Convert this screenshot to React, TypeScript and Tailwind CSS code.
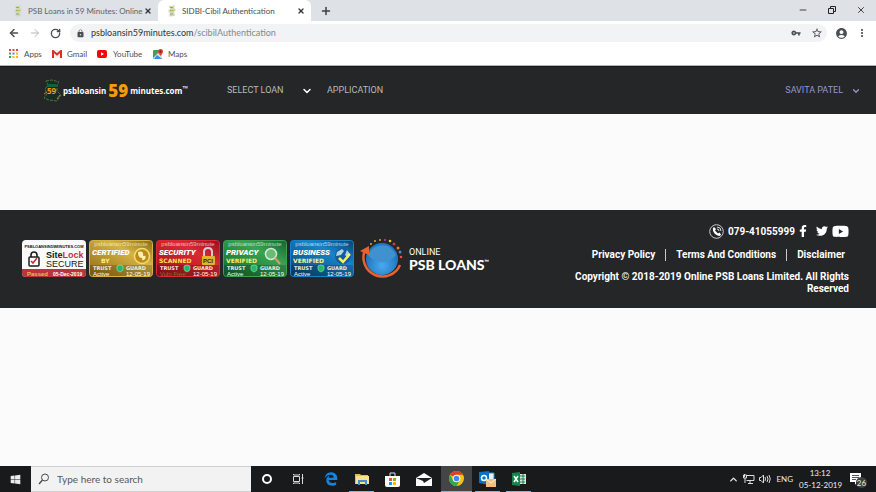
import type { ReactNode } from "react";
import { ArrowLeft, ArrowRight, ChevronDown, ChevronUp, Minus, Plus, RotateCw, X } from "lucide-react";
import { MdAccountCircle, MdLock, MdMoreVert, MdStarBorder, MdVpnKey } from "react-icons/md";
import { FaEdgeLegacy, FaFacebookF, FaTwitter, FaWindows, FaYoutube } from "react-icons/fa";

function Favicon() {
  return (
    <svg viewBox="0 0 10 12" className="h-3 w-[10px] shrink-0" aria-hidden="true">
      <path d="M2 1 8 0.5 7 3 9 5 7 7 8 11 2 11.5 3 8 1 6 3 4Z" fill="#cfd9b4" />
      <path d="M3 2.5h3M3 5.5h4M3 9h3" stroke="#93a86c" strokeWidth="1.2" />
      <path d="M4 5.5h3" stroke="#d9b64b" strokeWidth="1.2" />
    </svg>
  );
}

function Tab({ title, active }: { title: string; active?: boolean }) {
  return (
    <div
      className={
        active
          ? "flex h-[21px] w-[153px] items-center rounded-t-md bg-white pl-[9px] pr-1 text-[#4a4d51]"
          : "flex h-[21px] w-[158px] items-center pl-[13px] pr-1 text-[#5f6368]"
      }
    >
      <Favicon />
      <span className="ml-[5px] whitespace-nowrap">{title}</span>
      <button aria-label="Close tab" className="ml-auto flex size-3 items-center justify-center text-[#33363a]">
        <X size={8} strokeWidth={4} />
      </button>
    </div>
  );
}

function BrowserTop() {
  return (
    <header className="shrink-0 bg-white font-[Lato,sans-serif] text-[8px]">
      <div className="flex h-[21px] items-center bg-[#dee1e6]">
        <Tab title="PSB Loans in 59 Minutes: Online" />
        <Tab title="SIDBI-Cibil Authentication" active />
        <button aria-label="New tab" className="ml-[9px] text-[#3c4043]">
          <Plus size={12} strokeWidth={3} />
        </button>
        <div className="ml-auto flex items-center gap-5 pr-[10px] pb-[2px] text-[#222]">
          <button aria-label="Minimize"><Minus size={10} strokeWidth={2} /></button>
          <button aria-label="Restore">
            <svg width="8" height="8" viewBox="0 0 8 8" fill="none" stroke="currentColor"><path d="M.5 2.5h5v5h-5zM2.5 2V.5h5v5H6" /></svg>
          </button>
          <button aria-label="Close"><X size={10} strokeWidth={2} /></button>
        </div>
      </div>
      <div className="flex h-6 items-center pl-2 pr-2 text-[#4b4e52]">
        <button aria-label="Back" className="w-[21px]"><ArrowLeft size={12} strokeWidth={3} /></button>
        <button aria-label="Forward" className="w-[21px] text-[#b5b7ba]"><ArrowRight size={12} strokeWidth={2} /></button>
        <button aria-label="Reload" className="w-5"><RotateCw size={11} strokeWidth={3} /></button>
        <div className="flex h-[18px] flex-1 items-center rounded-full bg-[#f1f3f4] pl-[6px] pr-1">
          <MdLock size={9} />
          <div className="ml-[6px] flex-1 text-[9px] text-[#303337]">
            psbloansin59minutes.com<span className="text-[#85898d]">/scibilAuthentication</span>
          </div>
          <button aria-label="Saved passwords"><MdVpnKey size={10} /></button>
          <button aria-label="Bookmark this page" className="ml-[10px]"><MdStarBorder size={12} /></button>
        </div>
        <button aria-label="Profile" className="ml-2"><MdAccountCircle size={13} /></button>
        <button aria-label="Menu" className="ml-2"><MdMoreVert size={12} /></button>
      </div>
      <nav className="flex h-[21px] items-center border-b border-[#b4b4b4] pb-[3px] pl-[9px] text-[#4b4e52]" aria-label="Bookmarks">
        <a href="#apps" className="flex w-[43px] items-center gap-[6px]">
          <svg width="9" height="9" viewBox="0 0 9 9" aria-hidden="true">
            <path d="M0 0h2v2H0zM3.5 0h2v2h-2z" fill="#ea4335" />
            <path d="M7 0h2v2H7z" fill="#ea4335" />
            <path d="M0 3.500h2v2H0z" fill="#34a853" />
            <path d="M3.500 3.500h2v2h-2z" fill="#4285f4" />
            <path d="M7 3.500h2v2H7zM3.500 7h2v2h-2zM7 7h2v2H7z" fill="#fbbc05" />
            <path d="M0 7h2v2H0z" fill="#34a853" />
          </svg>
          Apps
        </a>
        <a href="#gmail" className="flex w-[45px] items-center gap-[5px]">
          <svg width="10" height="8" viewBox="0 0 10 8" aria-hidden="true">
            <path d="M0 0h10v8H0z" fill="#f1f1f1" />
            <path d="M1 8V1l4 3.500L9 1v7" fill="none" stroke="#d93025" strokeWidth="2" />
          </svg>
          Gmail
        </a>
        <a href="#youtube" className="flex w-14 items-center gap-[6px]">
          <svg width="10" height="8" viewBox="0 0 10 8" aria-hidden="true">
            <rect width="10" height="8" rx="2" fill="#f00" />
            <path d="m4 2.300 3 1.700-3 1.700z" fill="#fff" />
          </svg>
          YouTube
        </a>
        <a href="#maps" className="flex items-center gap-[5px]">
          <svg width="10" height="10" viewBox="0 0 10 10" aria-hidden="true">
            <rect y="1" width="9" height="9" rx="1" fill="#34a853" />
            <path d="M0 9 7 2l2 2v5L8 10H1z" fill="#d7dce0" />
            <path d="m4 6 5 4H1z" fill="#4285f4" />
            <path d="M7.500 7C6.500 5 5 4.500 5 2.500a2.500 2.500 0 0 1 5 0C10 4.500 8.500 5 7.500 7" fill="#e33b2e" />
            <circle cx="7.500" cy="2.500" r=".9" fill="#7c1f18" />
          </svg>
          Maps
        </a>
      </nav>
    </header>
  );
}

function SiteNav() {
  return (
    <nav className="flex h-12 shrink-0 items-center border-t border-[#17181a] bg-[#242628] pl-[42px] pr-[15px] font-[Roboto,sans-serif] text-[9px] text-[#b9babc]">
      <a href="#home" className="flex w-[185px] items-center font-['Open_Sans',sans-serif] text-[8px] font-bold text-white">
        <svg width="20" height="23" viewBox="0 0 20 23" className="shrink-0" aria-hidden="true">
          <path d="m4 2 6-1 7 2-2 3v6l4 4-4 6-8-1-5-2 3-4-2-5 3-4z" fill="#182d21" stroke="#4d7448" strokeDasharray="3 1" />
          <path d="M5 5h9v3H5z" fill="#0b6440" />
          <path d="m2 15 3-2m10 7 3-4" stroke="#b18536" />
          <text x="5" y="15" fontSize="8" fontWeight="700" fill="#f39b14" fontFamily="Open Sans">59</text>
        </svg>
        <span className="ml-[1px]">psbloansin</span>
        <span className="mx-[2px] text-[17px] font-extrabold leading-5 text-[#f79a0b]">59</span>
        <span>minutes.com</span>
        <span className="-mt-1 text-[7px] leading-3">™</span>
      </a>
      <button className="flex w-[100px] items-center text-left">
        <span className="w-[74px]">SELECT LOAN</span>
        <ChevronDown size={12} strokeWidth={3} className="text-white" />
      </button>
      <a href="#application">APPLICATION</a>
      <button className="ml-auto flex items-center gap-2 text-[#9697cf]">
        SAVITA PATEL
        <ChevronDown size={10} strokeWidth={3} />
      </button>
    </nav>
  );
}

function SiteLockSeal() {
  return (
    <svg viewBox="0 0 64 38" className="h-[38px] w-16" role="img" aria-label="SiteLock Secure" fontFamily="Liberation Sans">
      <defs><clipPath id="lock-shape"><rect width="64" height="37" rx="4" /></clipPath></defs>
      <g clipPath="url(#lock-shape)">
        <path d="M0 0h64v38H0z" fill="#fafafa" />
        <path d="M0 29h64v9H0z" fill="#b9343c" />
      </g>
      <text x="32" y="8" fontSize="4" fontWeight="700" textAnchor="middle" fill="#161616">PSBLOANSIN59MINUTES.COM</text>
      <path d="M9 18v-3q0-3 3-3t3 3v3" fill="none" stroke="#1d1d1d" strokeWidth="1.600" />
      <rect x="7" y="17" width="10" height="9" rx="1" fill="#fff" stroke="#1d1d1d" strokeWidth="1.500" />
      <path d="m9 21 2 2 4-5" fill="none" stroke="#ca303a" strokeWidth="1.600" />
      <text x="24" y="18" fontSize="9" fontWeight="700" fill="#151515">Site<tspan fill="#c72d38">Lock</tspan></text>
      <text x="24" y="27" fontSize="9" fill="#202020">SECURE</text>
      <text x="5" y="36" fontSize="6" fontWeight="700" fill="#e1c243">Passed</text>
      <text x="31" y="36" fontSize="5" fontWeight="700" fill="#fff">05-Dec-2019</text>
    </svg>
  );
}

type SealProps = { id: string; title: string; sub: string; light: string; dark: string; status: string; subColor: string; children: ReactNode };

function TrustSeal({ id, title, sub, light, dark, status, subColor, children }: SealProps) {
  return (
    <svg viewBox="0 0 64 38" className="h-[38px] w-16" role="img" aria-label={`${title} ${sub}`} fontFamily="Liberation Sans">
      <defs>
        <linearGradient id={id} x1="0" y1="1" x2="1" y2="0">
          <stop offset="0" stopColor={dark} />
          <stop offset=".65" stopColor={light} />
          <stop offset="1" stopColor={dark} />
        </linearGradient>
      </defs>
      <rect x=".5" y=".5" width="63" height="36" rx="3" fill={`url(#${id})`} stroke={light} />
      <path d="M1 25h62v9q0 2-2 2H3q-2 0-2-2z" fill="#000" opacity=".18" />
      <text x="32" y="6" fontSize="6" textAnchor="middle" fill="#fff" opacity=".65">psbloansin59minute</text>
      {children}
      <text x="3" y="15" fontSize="8" fontWeight="900" fontStyle="italic" fill="#fff" fontFamily="Roboto, sans-serif">{title}</text>
      <text x={sub === "BY" ? 12 : 3} y="23" fontSize="6" fontWeight="700" fill={subColor} fontFamily="DejaVu Sans">{sub}</text>
      <text x="4" y="30" fontSize="5" fontWeight="700" fill="#f1eee2" fontFamily="DejaVu Sans">TRUST</text>
      <text x="37" y="30" fontSize="5" fontWeight="700" fill="#f1eee2" fontFamily="DejaVu Sans">GUARD</text>
      <path d="m28 26 3-1 3 1v3q0 2-3 3-3-1-3-3z" fill="#20b969" stroke="#a6dfb9" strokeWidth=".6" />
      <text x="4" y="36" fontSize="6" fill={status === "Active" ? "#fff" : "#7d7a35"}>{status}</text>
      <text x="37" y="36" fontSize="6" fill="#fff">12-05-19</text>
    </svg>
  );
}

function Seals() {
  return (
    <div className="flex gap-[3px]">
      <SiteLockSeal />
      <TrustSeal id="gold" title="CERTIFIED" sub="BY" light="#d5b345" dark="#8d6910" status="Active" subColor="#ffee72">
        <circle cx="53" cy="16" r="7.500" fill="#bc8c17" stroke="#f3dc77" strokeWidth="1.500" />
        <path d="M49 12q6-2 5 4 4-1 2 3-3 3-3-1-4 0-4-6" fill="#fbefb4" />
      </TrustSeal>
      <TrustSeal id="red" title="SECURITY" sub="SCANNED" light="#dc2935" dark="#96101b" status="Vuln Free" subColor="#ffe44e">
        <path d="M48 16v-4q0-4 4-4t4 4v4" fill="none" stroke="#cfd2d2" strokeWidth="2" />
        <rect x="46" y="16" width="13" height="9" rx="1" fill="#e1b32e" />
        <text x="47" y="23" fontSize="6" fontWeight="700" fill="#372100">PCI</text>
      </TrustSeal>
      <TrustSeal id="green" title="PRIVACY" sub="VERIFIED" light="#3aa352" dark="#12642d" status="Active" subColor="#f7ee66">
        <circle cx="48" cy="14" r="5.500" fill="#6abb74" stroke="#d5ead5" strokeWidth="1.500" />
        <path d="m52 18 5 6" stroke="#d99c68" strokeWidth="2" />
      </TrustSeal>
      <TrustSeal id="blue" title="BUSINESS" sub="VERIFIED" light="#1784c7" dark="#084172" status="Active" subColor="#f4f49a">
        <circle cx="53" cy="16" r="8" fill="#1659a0" />
        <path d="m47 12 5-3 2 2-3 4-5 1m11-6 3 4-2 4-3-3z" fill="#a8d5df" />
        <path d="m49 18 4 4 7-8" fill="none" stroke="#edf65e" strokeWidth="2.500" />
      </TrustSeal>
    </div>
  );
}

function PsbLogo() {
  return (
    <div className="flex items-center text-white">
      <svg width="45" height="45" viewBox="0 0 45 45" aria-hidden="true">
        <defs>
          <radialGradient id="orb" cy=".7"><stop stopColor="#49aaf1" /><stop offset="1" stopColor="#2377bf" /></radialGradient>
        </defs>
        <circle cx="23" cy="22" r="16" fill="url(#orb)" />
        <path d="M9 18c5-12 22-14 28 0-5 8-20 10-28 0" fill="#3f91cf" />
        <path d="M6 13A19 19 0 1 0 41 28" fill="none" stroke="#ea6130" strokeWidth="2.500" />
        <path d="m1 14 9-5v9" fill="#ea6130" />
        <circle cx="12" cy="7" r="1" fill="#d8a838" /><circle cx="16" cy="4" r="1" fill="#b7bd44" />
        <circle cx="21" cy="3" r="1" fill="#e99c34" /><circle cx="26" cy="3" r="1.200" fill="#943c92" />
        <circle cx="31" cy="4" r="1.300" fill="#e6c643" /><circle cx="35" cy="7" r="1.500" fill="#c33857" />
        <circle cx="39" cy="11" r="1.500" fill="#e87c31" /><circle cx="41" cy="15" r="1.500" fill="#398ecf" />
        <circle cx="42" cy="20" r="1.300" fill="#e05245" />
      </svg>
      <div className="ml-[5px]">
        <div className="font-[Roboto,sans-serif] text-[9px] leading-3">ONLINE</div>
        <div className="flex font-[Lato,sans-serif] text-[14px] font-black leading-[14px]">PSB LOANS<span className="text-[6px] leading-[8px]">™</span></div>
      </div>
    </div>
  );
}

function SiteFooter() {
  return (
    <footer className="flex h-[98px] shrink-0 items-center bg-[#242628] pl-[22px] pr-[27px]">
      <Seals />
      <div className="ml-[5px]"><PsbLogo /></div>
      <div className="ml-auto flex w-[290px] flex-col items-end font-[Roboto,sans-serif] text-[10px] font-bold text-white">
        <div className="flex h-4 items-center">
          <svg width="15" height="15" viewBox="0 0 15 15" fill="none" aria-hidden="true">
            <circle cx="7.500" cy="7.500" r="6.800" stroke="#c8c9ca" />
            <path d="m4 4 1-1 2 2-1 1.500 3 3 1.500-1 1.500 2-1 1.500C7 12 3 8 4 4" fill="#fff" />
            <path d="M8 3q4 0 4 4M8 5q2 0 2 2" stroke="#ddd" />
          </svg>
          <a href="tel:07941055999" className="ml-1">079-41055999</a>
          <a href="#facebook" aria-label="Facebook" className="ml-[2px]"><FaFacebookF size={12} /></a>
          <a href="#twitter" aria-label="Twitter" className="ml-[7px]"><FaTwitter size={12} /></a>
          <a href="#yt" aria-label="YouTube channel" className="ml-1"><FaYoutube size={17} /></a>
        </div>
        <div className="mt-2 flex h-4 items-center pr-1 leading-3">
          <a href="#privacy" className="pr-[10px]">Privacy Policy</a>
          <a href="#terms" className="border-x border-[#c9c9c9] px-[10px]">Terms And Conditions</a>
          <a href="#disclaimer" className="pl-[10px]">Disclaimer</a>
        </div>
        <p className="mt-2 text-right leading-3">Copyright © 2018-2019 Online PSB Loans Limited. All Rights Reserved</p>
      </div>
    </footer>
  );
}

function TaskButton({ label, state, children }: { label: string; state?: "open" | "active"; children: ReactNode }) {
  return (
    <button
      aria-label={label}
      className={`flex h-[26px] w-[31px] flex-col items-center ${state === "active" ? "bg-[#444546]" : ""}`}
    >
      <span className="flex flex-1 items-center justify-center">{children}</span>
      {state && <span className={`h-px bg-[#76b9ed] ${state === "active" ? "w-full" : "w-[25px]"}`} />}
    </button>
  );
}

function Taskbar() {
  return (
    <div className="flex h-[26px] shrink-0 items-center bg-[#191a1b] font-[Lato,sans-serif] text-[8px] text-[#ececec]">
      <button aria-label="Start" className="flex w-[31px] justify-center"><FaWindows size={11} /></button>
      <label className="flex h-[26px] w-[220px] items-center border-y border-[#d0d0d0] bg-[#f2f2f2] pl-[7px] text-[#47494b]">
        <svg width="12" height="12" viewBox="0 0 12 12" fill="none" stroke="currentColor" aria-hidden="true"><circle cx="7" cy="4.500" r="3.500" /><path d="M4.500 7 1 11" strokeWidth="1.300" /></svg>
        <input aria-label="Type here to search" placeholder="Type here to search" className="ml-[7px] w-40 bg-transparent text-[10px] outline-none placeholder:text-[#55585b]" />
      </label>
      <TaskButton label="Cortana"><span className="size-[10px] rounded-full border-2 border-white" /></TaskButton>
      <TaskButton label="Task view">
        <svg width="12" height="10" viewBox="0 0 12 10" fill="none" stroke="#ddd"><path d="M1.500 2.500h6v5h-6zM1.500 0v1h6V0M1.500 10V9h6v1M10.500 0v10M9.500 4h2" /></svg>
      </TaskButton>
      <span className="w-[2px]" />
      <TaskButton label="Edge"><FaEdgeLegacy size={14} color="#1683dc" /></TaskButton>
      <TaskButton label="File Explorer" state="open">
        <svg width="14" height="12" viewBox="0 0 14 12"><path d="M0 1h5l1 1h7v9H0z" fill="#e9b94e" /><path d="M1 3h13v8H1z" fill="#fce08a" /><path d="M3 7h9v5h-2V9H5v3H3z" fill="#408fce" /></svg>
      </TaskButton>
      <TaskButton label="Store">
        <svg width="15" height="15" viewBox="0 0 15 15"><path d="M5 4V1h5v3" fill="none" stroke="#ddd" /><path d="M0 4h15v9q0 2-2 2H2q-2 0-2-2z" fill="#fff" /><path d="M4 6h3v3H4z" fill="#f25022" /><path d="M8 6h3v3H8z" fill="#7fba00" /><path d="M4 10h3v3H4z" fill="#00a4ef" /><path d="M8 10h3v3H8z" fill="#ffb900" /></svg>
      </TaskButton>
      <TaskButton label="Mail">
        <svg width="16" height="13" viewBox="0 0 16 13"><path d="m0 5 8-5 8 5v8H0z" fill="#fff" /><path d="M0 5h16l-8 5-1-2z" fill="#202122" /></svg>
      </TaskButton>
      <span className="w-[2px]" />
      <TaskButton label="Chrome" state="active">
        <svg width="15" height="15" viewBox="0 0 16 16"><circle cx="8" cy="8" r="8" fill="#fbc116" /><path d="M8 8 1.100 4A8 8 0 0 1 14.900 4H8z" fill="#e33b2e" /><path d="M1.100 4A8 8 0 0 0 8 16l3.500-6L8 8 4.500 10z" fill="#2da94f" /><circle cx="8" cy="8" r="4" fill="#fff" /><circle cx="8" cy="8" r="3" fill="#4285f4" /></svg>
      </TaskButton>
      <TaskButton label="Outlook" state="open">
        <svg width="17" height="16" viewBox="0 0 17 16"><path d="M9 2h6v8H9z" fill="#e5f1fa" stroke="#3386c5" /><path d="M0 1 10 0v14L0 12z" fill="#0872c6" /><circle cx="5" cy="7" r="2.500" fill="none" stroke="#fff" strokeWidth="1.500" /><path d="M7 8h10v8H7z" fill="#f1c080" /><path d="m7 8 5 4 5-4" fill="none" stroke="#fff1cf" /></svg>
      </TaskButton>
      <TaskButton label="Excel" state="open">
        <svg width="14" height="14" viewBox="0 0 14 14"><path d="M7 2h7v10H7z" fill="#d8eadd" /><path d="M8 4h5M8 7h5M8 10h5M11 2v10" stroke="#218150" /><path d="m0 1 8-1v14l-8-1z" fill="#14834c" /><path d="m2 4 4 6m0-6-4 6" stroke="#fff" strokeWidth="1.500" /></svg>
      </TaskButton>
      <div className="ml-auto flex items-center pr-[9px]">
        <ChevronUp size={11} strokeWidth={3} />
        <svg width="12" height="10" viewBox="0 0 12 10" className="ml-1" fill="none" stroke="#ddd"><path d="M4 1.500h7v5H3.500M7 7v2M5 9.500h5M1.500 0v3M.5 1h3v3h-3zM2 4v5" /></svg>
        <svg width="12" height="10" viewBox="0 0 12 10" className="ml-1" fill="none" stroke="#ddd"><path d="M.5 3.500H2L4.500 1v8L2 6.500H.5zM6 3q1 2 0 4M8 2q2 3 0 6M10 1q2.500 4 0 8" /></svg>
        <span className="ml-[5px]">ENG</span>
        <div className="ml-[6px] w-[42px] whitespace-nowrap text-center leading-3"><div>13:12</div><div>05-12-2019</div></div>
        <button aria-label="26 notifications" className="relative ml-[9px] h-[18px] w-[17px]">
          <svg width="12" height="12" viewBox="0 0 12 12"><path d="M0 0h11v9H7l-2 3V9H0z" fill="#fff" /><path d="M2 2.500h7M2 4.500h7M2 6.500h4" stroke="#555" /></svg>
          <span className="absolute bottom-0 right-0 flex size-[11px] items-center justify-center rounded-full bg-[#3d3e3f] text-[8px]">26</span>
        </button>
      </div>
    </div>
  );
}

export default function App() {
  return (
    <div className="flex min-h-screen flex-col bg-[#fbfbfb]">
      <BrowserTop />
      <SiteNav />
      <main className="h-24 shrink-0" />
      <SiteFooter />
      <div className="flex-1" />
      <Taskbar />
    </div>
  );
}
